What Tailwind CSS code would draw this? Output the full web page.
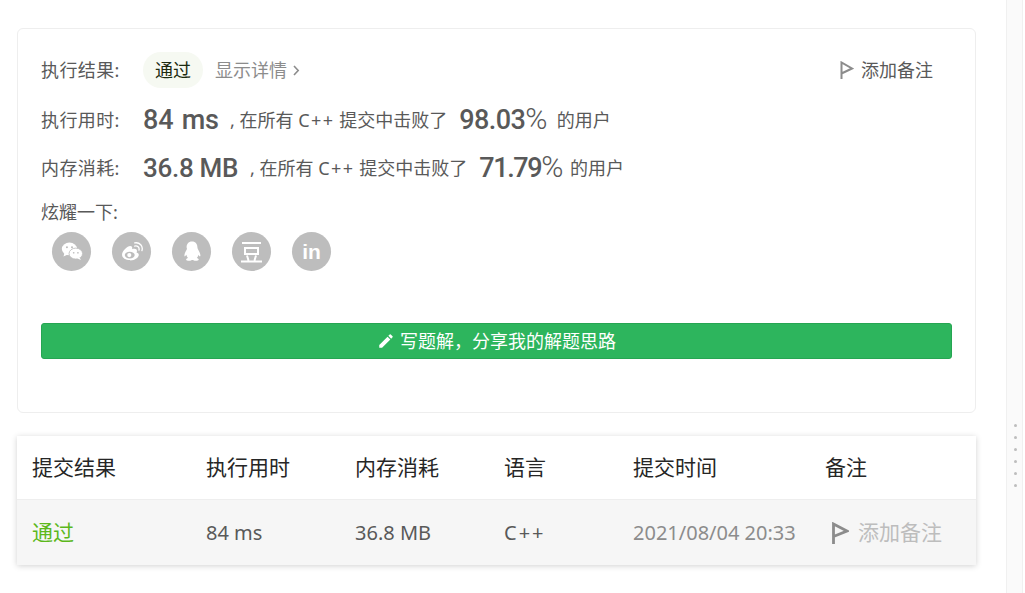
<!DOCTYPE html>
<html lang="zh-CN">

<head>
    <meta charset="UTF-8">
    <meta name="viewport" content="width=device-width, initial-scale=1.0">
    <title>提交结果</title>
    <script src="https://cdn.jsdelivr.net/npm/@tailwindcss/browser@4"></script>
</head>

<body class="bg-white h-[593px] w-[1025px] overflow-hidden font-['Noto_Sans','Noto_Sans_CJK_SC',sans-serif] text-[#595959]">
    <div class="flex h-[593px]">
        <main class="w-[1006px] pl-[17px] pr-[30px] pt-[28px]">
            <!-- result card -->
            <section class="h-[385px] border border-[#eeeeee] rounded-md px-[23px] pt-[23px] text-[18px]">
                <div class="flex items-center h-[36px]">
                    <span class="w-[102px] tracking-[0.4px]">执行结果:</span>
                    <span class="w-[60px] h-[36px] rounded-full bg-[#f6f9f2] text-[#1c2a10] flex items-center justify-center">通过</span>
                    <span class="ml-[12px] text-[#8c8c8c]">显示详情</span>
                    <svg class="ml-[6px]" width="7" height="11" viewBox="0 0 7 11" fill="none" stroke="#8c8c8c" stroke-width="1.6"><path d="M1 1l4.200 4.500L1 10"/></svg>
                    <span class="ml-auto mr-[19px] flex items-center gap-[7px]">
                        <svg width="14" height="18" viewBox="0 0 14 18" fill="none" stroke="#8c8c8c" stroke-width="2"><path d="M1.500 18V1.500L12 7.500 1.500 12.500"/></svg>
                        添加备注
                    </span>
                </div>
                <div class="flex items-center h-[30px] mt-[17px]">
                    <span class="w-[102px] tracking-[0.4px]">执行用时:</span>
                    <span class="font-['Roboto'] font-medium text-[27px] w-[87px] [word-spacing:2px] tracking-[-0.2px]">84 ms</span>
                    <span class="whitespace-pre">, 在所有 <span class="tracking-[1.500px]">C++</span> 提交中击败了</span>
                    <span class="font-['Roboto'] font-medium text-[27px] ml-[12px] tracking-[-0.6px]">98.03<span class="font-light text-[30px] leading-none">%</span></span>
                    <span class="ml-[10px]">的用户</span>
                </div>
                <div class="flex items-center h-[30px] mt-[18px]">
                    <span class="w-[102px] tracking-[0.4px]">内存消耗:</span>
                    <span class="font-['Roboto'] font-medium text-[26px] w-[107px] tracking-[-0.3px]">36.8 MB</span>
                    <span class="whitespace-pre">, 在所有 <span class="tracking-[1.500px]">C++</span> 提交中击败了</span>
                    <span class="font-['Roboto'] font-medium text-[27px] ml-[12px] tracking-[-1.400px]">71.79<span class="font-light text-[30px] leading-none">%</span></span>
                    <span class="ml-[8px]">的用户</span>
                </div>
                <div class="mt-[17px] h-[24px] leading-[24px]">炫耀一下:</div>
                <div class="flex gap-[21px] ml-[11px] mt-[8px]">
                    <span class="w-[39px] h-[39px] rounded-full bg-[#bdbdbd] flex items-center justify-center">
                        <svg width="22" height="19" viewBox="0 0 26 22"><ellipse cx="10" cy="8" rx="9" ry="7.500" fill="#fff"/><path d="M4 13l-1 4 5-2.500z" fill="#fff"/><ellipse cx="17.500" cy="13.500" rx="8" ry="6.500" fill="#fff" stroke="#bdbdbd"/><path d="M22 18l1.500 3-4.500-2z" fill="#fff"/><circle cx="7" cy="6" r="1.200" fill="#bdbdbd"/><circle cx="13" cy="6" r="1.200" fill="#bdbdbd"/><circle cx="15" cy="12.500" r="1" fill="#bdbdbd"/><circle cx="20" cy="12.500" r="1" fill="#bdbdbd"/></svg>
                    </span>
                    <span class="w-[39px] h-[39px] rounded-full bg-[#bdbdbd] flex items-center justify-center">
                        <svg width="22" height="19" viewBox="0 0 24 21" fill="none"><path d="M10 20c-5 0-9-2.500-9-6 0-4 6-9.500 9-9.500 2.500 0 2.500 2 2 3.500 3-1 5.500-.5 5.500 2 0 .8-.2 1.200-.5 1.500 2 .7 2.500 1.700 2.500 2.700 0 3-4 6.300-9.500 6.300z" fill="#fff"/><ellipse cx="9.500" cy="14.500" rx="5.500" ry="3.800" fill="#bdbdbd"/><circle cx="9" cy="14.500" r="2.300" fill="#fff"/><path d="M15 4.500c3-.8 5.500 1.500 4.700 4.500M15 1c5.500-1 9.500 3.500 8 8.500" stroke="#fff" stroke-width="1.500" stroke-linecap="round"/></svg>
                    </span>
                    <span class="w-[39px] h-[39px] rounded-full bg-[#bdbdbd] flex items-center justify-center">
                        <svg width="20" height="23" viewBox="0 0 24 26" fill="#fff"><path d="M12 1c4.500 0 6.500 3.300 6.500 7 0 1 .2 1.500.8 2.500 1.500 2.500 3.200 5.500 2.700 8-.3 1.200-1.500 0-2.200-1.500-.3 1.500-1 2.800-2 3.700 1.500.5 2.500 1.200 2.200 2.300-.3 1-3 1.500-5 1-1-.3-1.500-.8-2-.8h-1c-.5 0-1 .5-2 .8-2 .5-4.700 0-5-1-.3-1.100.7-1.800 2.200-2.300-1-.9-1.700-2.200-2-3.700C4.500 18 3.300 19.700 3 18.500c-.5-2.500 1.200-5.500 2.700-8C6.300 9.500 5.500 9 5.500 8c0-3.700 2-7 6.500-7z"/></svg>
                    </span>
                    <span class="w-[39px] h-[39px] rounded-full bg-[#bdbdbd] flex items-center justify-center">
                        <svg width="21" height="22" viewBox="0 0 21 22" fill="none" stroke="#fff" stroke-width="2"><path d="M1 2h19M4 7h13v6H4zM6 14.500l1.500 5M15 14.500l-1.500 5M0 20.500h21"/></svg>
                    </span>
                    <span class="w-[39px] h-[39px] rounded-full bg-[#bdbdbd] flex items-center justify-center text-white font-['Liberation_Sans'] font-bold text-[21px] leading-none">in</span>
                </div>
                <button class="mt-[52px] w-full h-[36px] rounded-[3px] bg-[#2db55d] border border-[#26a552] text-white text-[18px] flex items-center justify-center gap-[5px]">
                    <svg width="18" height="18" viewBox="0 0 24 24" fill="#fff"><path d="M3 17.250V21h3.750L17.810 9.940l-3.750-3.750L3 17.250zM20.710 7.040a1 1 0 0 0 0-1.410l-2.340-2.340a1 1 0 0 0-1.410 0l-1.830 1.830 3.750 3.750 1.830-1.830z"/></svg>
                    写题解&#65292;分享我的解题思路
                </button>
            </section>

            <!-- submission table -->
            <section class="mt-[23px] h-[129px] shadow-[0_1px_6px_rgba(0,0,0,0.18)] text-[#262626]">
                <div class="flex items-center h-[64px] pl-[15px] border-b border-[#eeeeee] text-[21px]">
                    <span class="w-[174px]">提交结果</span>
                    <span class="w-[149px]">执行用时</span>
                    <span class="w-[149px]">内存消耗</span>
                    <span class="w-[129px]">语言</span>
                    <span class="w-[192px]">提交时间</span>
                    <span>备注</span>
                </div>
                <div class="flex items-center h-[65px] pl-[15px] bg-[#f6f6f6] text-[#595959] text-[20px]">
                    <span class="w-[174px] text-[#5cb81c] text-[21px]">通过</span>
                    <span class="w-[149px]">84 ms</span>
                    <span class="w-[149px]">36.8 MB</span>
                    <span class="w-[129px] tracking-[2px]">C++</span>
                    <span class="w-[199px] text-[#8c8c8c]">2021/08/04 20:33</span>
                    <span class="flex items-center gap-[9px] text-[#bdbdbd] text-[21px]">
                        <svg width="17" height="22" viewBox="0 0 17 22" fill="none" stroke="#8c8c8c" stroke-width="2.800"><path d="M1.500 22V2L15 9 1.500 14.500"/></svg>
                        添加备注
                    </span>
                </div>
            </section>
        </main>

        <!-- side rail -->
        <aside class="w-[17px] pl-[1px] bg-[#fafafa] border-x border-[#f0f0f0] flex flex-col items-center gap-[9px] pt-[424px]">
            <span class="w-[3px] h-[3px] rounded-full bg-[#bdbdbd]"></span>
            <span class="w-[3px] h-[3px] rounded-full bg-[#bdbdbd]"></span>
            <span class="w-[3px] h-[3px] rounded-full bg-[#bdbdbd]"></span>
            <span class="w-[3px] h-[3px] rounded-full bg-[#bdbdbd]"></span>
            <span class="w-[3px] h-[3px] rounded-full bg-[#bdbdbd]"></span>
            <span class="w-[3px] h-[3px] rounded-full bg-[#bdbdbd]"></span>
        </aside>
    </div>
</body>

</html>
